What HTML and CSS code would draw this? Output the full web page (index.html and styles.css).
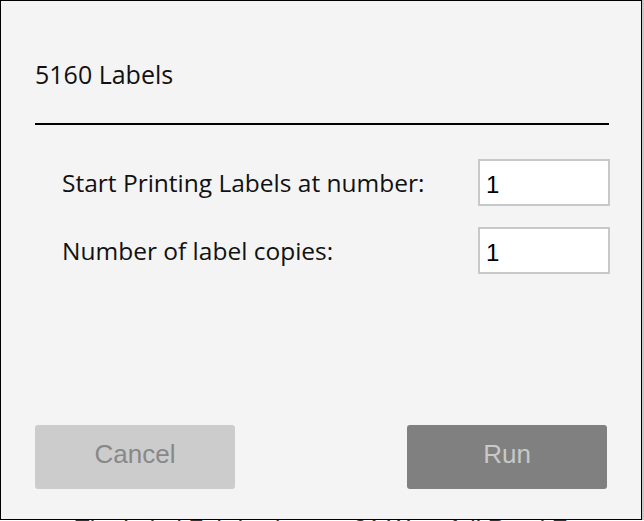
FILE: index.html
```html
<!DOCTYPE html>
<html lang="en">
<head>
    <meta charset="UTF-8">
    <title>5160 Labels</title>
    <link rel="stylesheet" href="styles.css">
</head>
<body>
<div class="dialog">
    <h1 class="dialog-title">5160 Labels</h1>

    <div class="fields">
        <div class="field-row">
            <label for="startAt">Start Printing Labels at number:</label>
            <input type="text" id="startAt" value="1">
        </div>
        <div class="field-row">
            <label for="copies">Number of label copies:</label>
            <input type="text" id="copies" value="1">
        </div>
    </div>

    <div class="buttons">
        <button class="btn btn-cancel">Cancel</button>
        <button class="btn btn-run">Run</button>
    </div>
</div>
<div class="page-behind">The Label Fabrication &nbsp; &nbsp; &nbsp; 31 Waterfall Road East</div>
</body>
</html>
```

FILE: styles.css
```css
body {
    margin: 0;
    padding: 0;
    background-color: #fff;
    font-family: "Open Sans", Lato, sans-serif;
    overflow: hidden;
}
.dialog {
    width: 640px;
    height: 518px;
    background-color: #f4f4f4;
    border: 1px solid #000;
    box-shadow: 2px 0 0 #c8c8c8;
    display: flex;
    flex-direction: column;
}
.dialog-title {
    margin: 56px 32px 0 34px;
    height: 66px;
    font-size: 25px;
    line-height: 34px;
    font-weight: normal;
    color: #111;
    border-bottom: 2px solid #000;
}
.fields {
    padding: 34px 31px 0 61px;
    display: flex;
    flex-direction: column;
    gap: 21px;
}
.field-row {
    display: flex;
    align-items: center;
    justify-content: space-between;
}
.field-row label {
    font-size: 24.5px;
    color: #111;
}
.field-row input {
    width: 132px;
    height: 47px;
    box-sizing: border-box;
    border: 2px solid #c8c8c8;
    background-color: #fff;
    padding: 4px 6px 0;
    font-family: "Liberation Sans", Arial, sans-serif;
    font-size: 24px;
    color: #000;
    outline: none;
}
.buttons {
    margin-top: auto;
    padding: 0 34px 30px 34px;
    display: flex;
    justify-content: space-between;
}
.btn {
    width: 200px;
    height: 64px;
    padding: 0 0 5px;
    border: none;
    border-radius: 3px;
    font-family: "Liberation Sans", Arial, sans-serif;
    font-size: 26px;
    cursor: pointer;
}
.btn-cancel {
    background-color: #cccccc;
    color: #888;
}
.btn-run {
    background-color: #808080;
    color: #c8c8c8;
}
.page-behind {
    padding-left: 75px;
    font-family: "Liberation Sans", Arial, sans-serif;
    font-size: 24px;
    line-height: 1;
    color: #333;
    white-space: nowrap;
    margin-top: -3px;
}
```
